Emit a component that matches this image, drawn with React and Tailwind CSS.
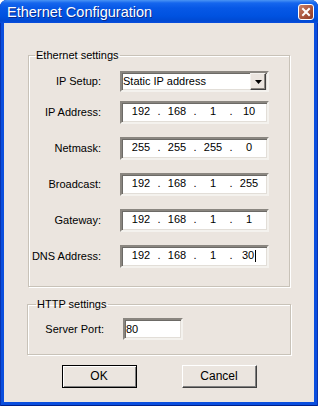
import React from "react";

const font = { fontFamily: '"Liberation Sans", Arial, sans-serif' };

function Sunken({ className = "", children }) {
  return (
    <div
      className={
        "bg-white border-2 border-t-[#8a8680] border-l-[#8a8680] border-b-[#f4f2ee] border-r-[#f4f2ee] shadow-[inset_1px_1px_0_#6c6a66,inset_-1px_-1px_0_#e2ded8] " +
        className
      }
    >
      {children}
    </div>
  );
}

function IpField({ parts, cursor }) {
  return (
    <Sunken className="h-[23px] w-[149px]">
      <div className="grid h-full grid-cols-[30px_6px_30px_6px_30px_6px_30px] items-center pl-[4px] pb-[2px] text-[11px] leading-[13px] text-black">
        {parts.map((p, i) => (
          <React.Fragment key={i}>
            {i > 0 && <span className="text-center">.</span>}
            <span className="flex items-center justify-center">
              {p}
              {cursor && i === 3 && <span className="ml-px inline-block h-[12px] w-px bg-black" />}
            </span>
          </React.Fragment>
        ))}
      </div>
    </Sunken>
  );
}

function Raised({ def, children }) {
  return (
    <button
      className={
        "flex h-[23px] w-[75px] items-center justify-center bg-[#ebe5df] text-[12px] text-black " +
        (def
          ? "border border-black shadow-[inset_1px_1px_0_#fff,inset_-1px_-1px_0_#808080]"
          : "border border-t-white border-l-white border-b-[#404040] border-r-[#404040] shadow-[inset_-1px_-1px_0_#808080]")
      }
      style={font}
    >
      {children}
    </button>
  );
}

const rows = [
  ["IP Address:", ["192", "168", "1", "10"]],
  ["Netmask:", ["255", "255", "255", "0"]],
  ["Broadcast:", ["192", "168", "1", "255"]],
  ["Gateway:", ["192", "168", "1", "1"]],
  ["DNS Address:", ["192", "168", "1", "30"], true],
];

export default function App() {
  return (
    <div className="h-[406px] w-[318px] bg-white" style={font}>
      <div className="flex h-full w-full flex-col rounded-t-[7px] bg-[#0a4ede] shadow-[inset_1px_0_0_#0833b0,inset_-1px_0_0_#0833b0,inset_0_-1px_0_#00218a]">
        {/* title bar */}
        <div className="flex h-[23px] items-center justify-between rounded-t-[7px] bg-[linear-gradient(#4a94f4_0px,#1566ee_3px,#0758e6_8px,#0052e0_16px,#0049d2_21px,#0a4ede_23px)] pl-[7px] pr-[4px]">
          <span className="text-[14.5px] leading-[16px] text-white [text-shadow:1px_1px_0_#0a2a8c]">
            Ethernet Configuration
          </span>
          <div className="flex h-[16px] w-[16px] items-center justify-center rounded-[3px] border border-white bg-[linear-gradient(135deg,#c8826a,#ad5840_50%,#8e3b26)]">
            <svg width="10" height="10" viewBox="0 0 10 10">
              <path d="M2 2 L8 8 M8 2 L2 8" stroke="#fff" strokeWidth="2" strokeLinecap="square" />
            </svg>
          </div>
        </div>
        {/* client */}
        <div className="mx-[4px] mb-[4px] flex flex-1 flex-col bg-[#ebe5df] px-[23px] text-[11px] leading-[13px] text-black">
          <fieldset className="mx-px mt-[26px] border border-[#c8c2b8] px-0 pb-[18px] shadow-[inset_1px_1px_0_#fff,1px_1px_0_#fff]">
            <legend className="ml-[6px] px-[1px] leading-[13px]">Ethernet settings</legend>
            <div className="mt-[9px] grid grid-cols-[72px_149px] items-center gap-x-[19px] gap-y-[13px]">
              <span className="text-right">IP Setup:</span>
              <Sunken className="flex h-[21px] w-[149px] items-center justify-between">
                <span className="pl-[1px]">Static IP address</span>
                <span className="mr-[1px] flex h-[17px] w-[16px] items-center justify-center border border-t-[#f4f2ee] border-l-[#f4f2ee] border-b-[#404040] border-r-[#404040] bg-[#ebe5df] shadow-[inset_-1px_-1px_0_#8a8680]">
                  <svg width="7" height="4" viewBox="0 0 7 4">
                    <path d="M0 0 H7 L3.5 4 Z" fill="#000" />
                  </svg>
                </span>
              </Sunken>
              {rows.map(([label, parts, cur], i) => (
                <React.Fragment key={label}>
                  <span className={"text-right " + (i === 0 ? "-mt-[4px]" : "")}>{label}</span>
                  <div className={i === 0 ? "-mt-[4px]" : ""}>
                    <IpField parts={parts} cursor={cur} />
                  </div>
                </React.Fragment>
              ))}
            </div>
          </fieldset>
          <fieldset className="mt-[11px] border border-[#c8c2b8] px-0 pb-[14px] shadow-[inset_1px_1px_0_#fff,1px_1px_0_#fff]">
            <legend className="ml-[8px] px-[1px] leading-[13px]">HTTP settings</legend>
            <div className="mt-[7px] flex items-center">
              <span className="w-[76px] text-right">Server Port:</span>
              <Sunken className="ml-[19px] flex h-[22px] w-[60px] items-center">
                <span className="pl-[1px]">80</span>
              </Sunken>
            </div>
          </fieldset>
          <div className="mt-[10px] flex justify-center gap-[45px]">
            <Raised def>OK</Raised>
            <Raised>Cancel</Raised>
          </div>
        </div>
      </div>
    </div>
  );
}
